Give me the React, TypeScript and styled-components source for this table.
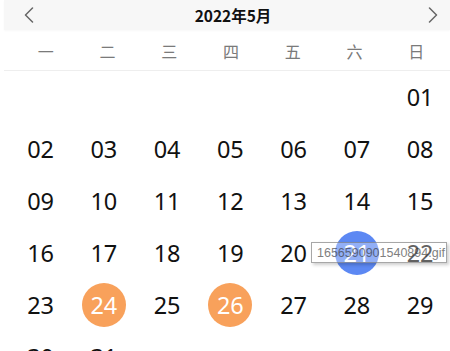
import React from 'react'
import styled, { createGlobalStyle } from 'styled-components'
// ______________________________________________________
//
const GlobalStyle = createGlobalStyle`
  html, body {
    margin: 0;
    padding: 0;
    background: #fff;
    overflow: hidden;
  }
`
// ______________________________________________________
//
type Day = {
  label: string
  mark?: 'orange' | 'blue'
}

const weekdays = ['一', '二', '三', '四', '五', '六', '日']

const pad = (n: number) => (n < 10 ? `0${n}` : `${n}`)

const days: (Day | null)[] = [
  ...Array(6).fill(null),
  ...Array.from({ length: 31 }, (_, i) => {
    const n = i + 1
    const mark: Day['mark'] =
      n === 24 || n === 26 ? 'orange' : n === 21 ? 'blue' : undefined
    return { label: pad(n), mark }
  }),
]

const markColors = {
  orange: '#f8a15b',
  blue: '#5c88f3',
}
// ______________________________________________________
//
const Chevron: React.FC<{ dir: 'left' | 'right' }> = ({ dir }) => (
  <svg width="10" height="16" viewBox="0 0 10 16">
    <polyline
      points={dir === 'left' ? '8.5,1 1.5,8 8.5,15' : '1.5,1 8.5,8 1.5,15'}
      fill="none"
      stroke="#666"
      strokeWidth="1.5"
      strokeLinecap="round"
      strokeLinejoin="round"
    />
  </svg>
)
// ______________________________________________________
//
const Component: React.FC<{ className?: string }> = (props) => (
  <div className={props.className}>
    <GlobalStyle />
    <Header>
      <NavButton>
        <Chevron dir="left" />
      </NavButton>
      <Title>2022年5月</Title>
      <NavButton>
        <Chevron dir="right" />
      </NavButton>
    </Header>
    <WeekRow>
      {weekdays.map((w) => (
        <WeekCell key={w}>{w}</WeekCell>
      ))}
    </WeekRow>
    <DayGrid>
      {days.map((d, i) => (
        <DayCell key={i}>
          {d && <DayMark $mark={d.mark}>{d.label}</DayMark>}
        </DayCell>
      ))}
      <Tooltip>1656590901540894.gif</Tooltip>
    </DayGrid>
  </div>
)
// ______________________________________________________
//
const Header = styled.div`
  display: grid;
  grid-template-columns: auto 1fr auto;
  align-items: center;
  height: 30px;
  padding: 0 12px 0 20px;
  background: #f7f7f7;
  box-shadow: 0 1px 2px rgba(0, 0, 0, 0.03);
`

const NavButton = styled.div`
  display: flex;
  align-items: center;
  height: 30px;
`

const Title = styled.div`
  text-align: center;
  padding-left: 4px;
  font-family: 'Noto Sans CJK SC', sans-serif;
  font-weight: 700;
  font-size: 15.5px;
  color: #111;
`

const WeekRow = styled.div`
  display: grid;
  grid-template-columns: repeat(7, 1fr);
  height: 41px;
  padding: 2px 3px 0 11px;
  box-sizing: border-box;
  border-bottom: 1px solid #eee;
`

const WeekCell = styled.div`
  display: flex;
  align-items: center;
  justify-content: center;
  font-family: 'Noto Sans CJK SC', sans-serif;
  font-size: 16px;
  color: #7a7a7a;
`

const DayGrid = styled.div`
  position: relative;
  display: grid;
  grid-template-columns: repeat(7, 63.25px);
  grid-auto-rows: 52px;
  margin-left: 5px;
`

const DayCell = styled.div`
  display: flex;
  align-items: center;
  justify-content: center;
`

const DayMark = styled.div<{ $mark?: 'orange' | 'blue' }>`
  display: flex;
  align-items: center;
  justify-content: center;
  width: 44px;
  height: 44px;
  border-radius: 50%;
  font-family: 'Noto Sans', sans-serif;
  font-size: 23.5px;
  color: ${(p) => (p.$mark ? '#fff' : '#111')};
  background: ${(p) => (p.$mark ? markColors[p.$mark] : 'transparent')};
`

const Tooltip = styled.div`
  position: absolute;
  left: 302px;
  top: 171px;
  width: 136px;
  height: 21px;
  box-sizing: border-box;
  padding-left: 5px;
  display: flex;
  align-items: center;
  border: 1px solid #8a8a8a;
  background: rgba(255, 255, 255, 0.45);
  box-shadow: 2px 2px 3px rgba(0, 0, 0, 0.25);
  font-family: 'Liberation Sans', Arial, sans-serif;
  font-size: 12.5px;
  color: #555;
  opacity: 0.75;
  white-space: nowrap;
  overflow: hidden;
`
// ______________________________________________________
//
const StyledComponent = styled(Component)`
  margin-left: 4px;
  width: 446px;
`
// ______________________________________________________
//
export default StyledComponent
